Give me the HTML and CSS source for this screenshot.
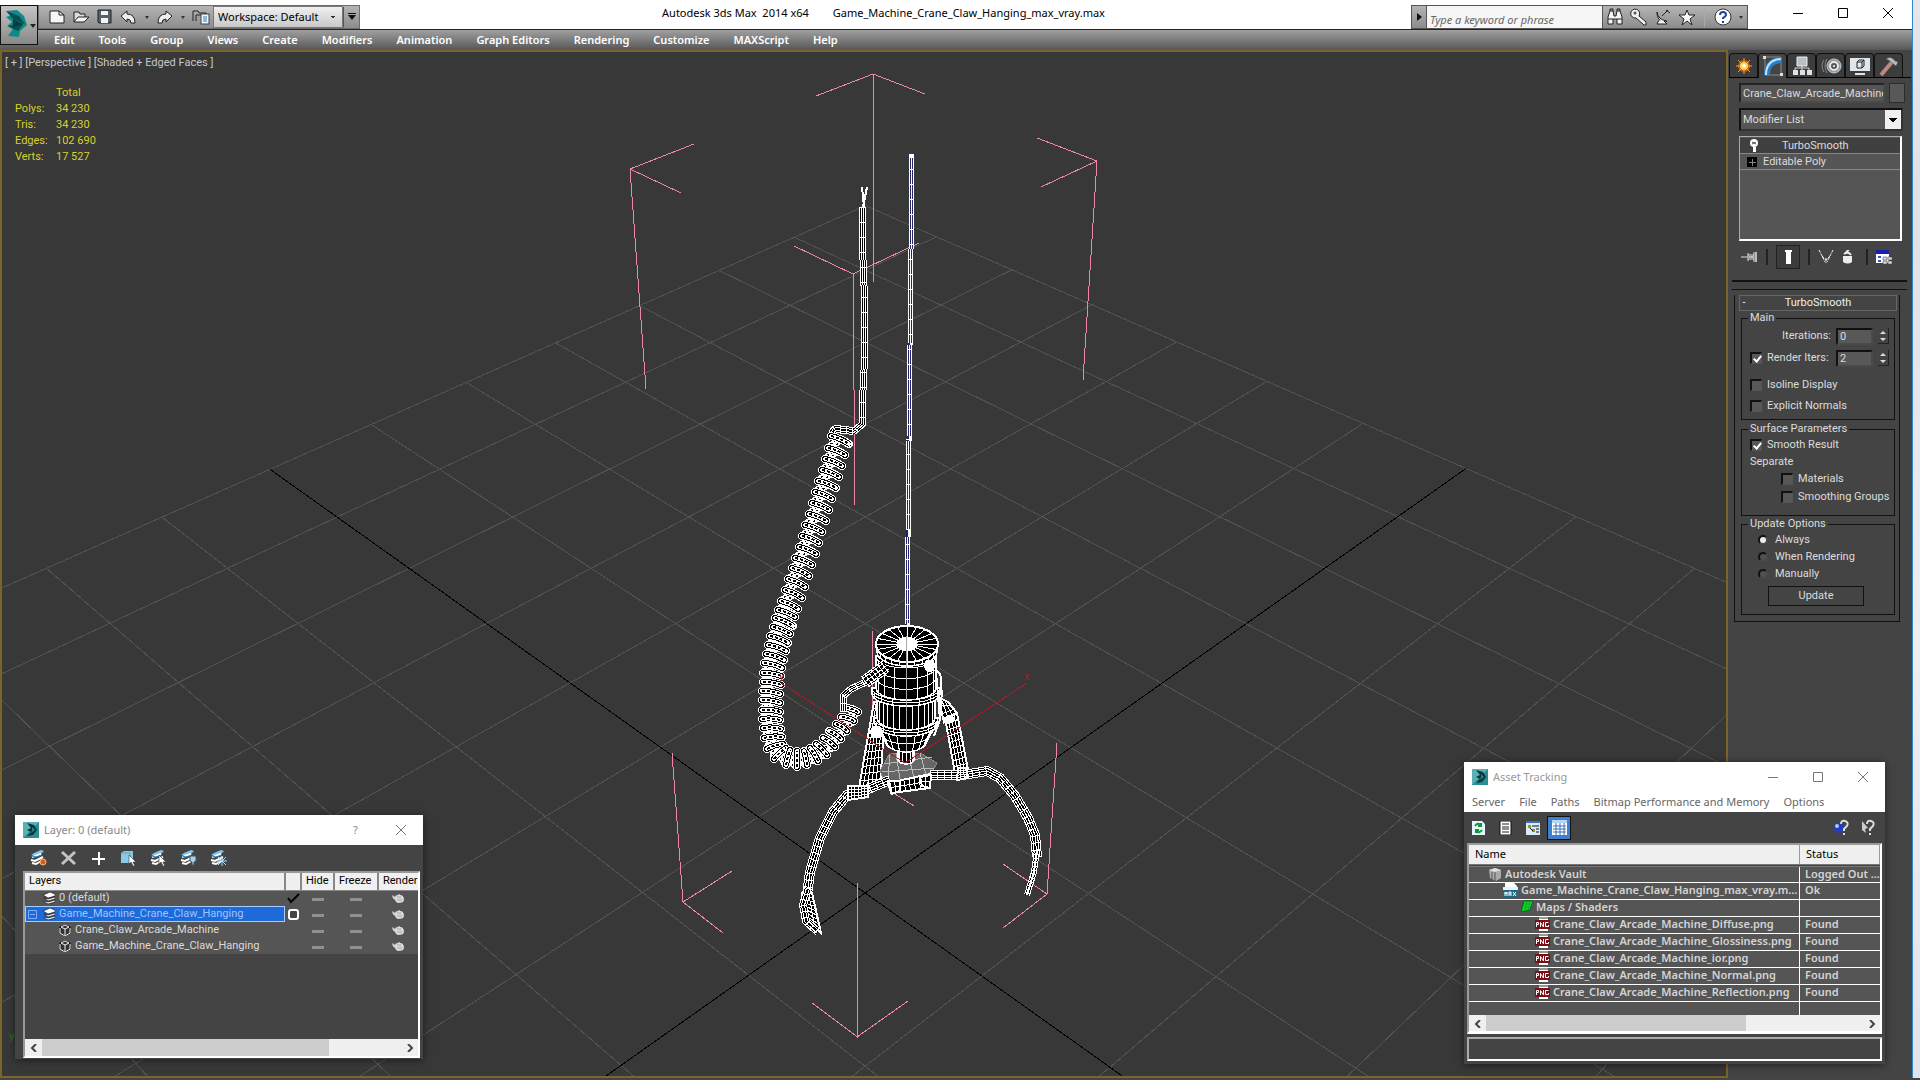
FILE: index.html
```
<!DOCTYPE html>
<html lang="en">
<head>
<meta charset="utf-8">
<title>Autodesk 3ds Max 2014 x64 - Game_Machine_Crane_Claw_Hanging_max_vray.max</title>
<link rel="stylesheet" href="styles.css">
</head>
<body>
<svg class="defs" width="0" height="0" aria-hidden="true">
  <symbol id="logo" viewBox="0 0 16 16">
    <rect width="16" height="16" fill="#2a8f95"/>
    <path d="M0 0h16L0 16z" fill="#7cc6c8" opacity=".6"/>
    <path d="M4 1l7 2 3 5-4 5-6 1 4-4-4-2 4-2z" fill="#07363c"/>
    <path d="M9 5l3 3-4 3 1-3z" fill="#1d8a86"/>
  </symbol>
  <symbol id="teapot" viewBox="0 0 14 11">
    <path d="M1 2l3 2q0-2 3-2 1-2 2 0 4 0 4 5 0 3-6 3-2 0-3-3Q1 5 1 2z" fill="#d8d8d8"/>
    <path d="M6 4h4M6 7h5" stroke="#aaa"/>
  </symbol>
  <symbol id="stack" viewBox="0 0 12 12">
    <path d="M0 3l7-3 5 2v2L5 6zM1 6l4 1 7-2v2L5 9zM1 9l4 1 7-2v2l-7 2-4-2z" fill="#fff" stroke="#000" stroke-width=".6"/>
  </symbol>
  <symbol id="cube" viewBox="0 0 12 12">
    <path d="M1 3l5-2 5 2v6l-5 3-5-3z" fill="#333" stroke="#000"/>
    <path d="M6 5l4-2M6 5L2 3l4-2 4 2M6 5v6M1 4v5l5 3 5-3V4" stroke="#f4f4f4" stroke-width="1" fill="none"/>
  </symbol>
  <symbol id="sheets" viewBox="0 0 17 16">
    <path d="M4 3l7-3 3 1-4 4H1z" fill="#7fc4ee"/>
    <path d="M2 7l9-3M1 10l4 1 8-4M2 13l4 1 7-4" stroke="#fff" stroke-width="2" fill="none"/>
    <path d="M2 6l4 1 6-2" stroke="#2a7bb5" fill="none"/>
  </symbol>
  <symbol id="png" viewBox="0 0 15 14">
    <path d="M4 0h9v14H4z" fill="#fff"/><path d="M4 0h9v2H4z" fill="#999"/>
    <rect y="3" width="15" height="9" fill="#7a0f16"/>
    <path d="M1.500 10V5.500h2v2h-2M5.500 10V5.500L8.500 10V5M13.500 5.500h-3v4h3V8" stroke="#fff" fill="none"/>
  </symbol>
</svg>

<div class="app">
<header class="head">
  <button class="app-button" aria-label="Application menu">
    <svg width="36" height="38" viewBox="0 0 36 38"><path d="M5 5l11-1 7 6 3 9-7 6-1 6-11-1 5-7-6-3 5-4-6-5 6-2z" fill="#0f8a86"/><path d="M5 5l13 5 6 8-12-5zM7 20l16-3-6 8-5-2z" fill="#075052"/><path d="M12 13l10 5-10 3z" fill="#0a3c40"/><path d="M29 18h6l-3 4z" fill="#222"/></svg>
  </button>
  <div class="titlebar">
    <div class="quick">
      <button aria-label="New"><svg width="18" height="16" viewBox="0 0 18 16"><path d="M2 2h9l5 4v8H2z" fill="#f6f6f6" stroke="#222"/><path d="M11 2v4h5" fill="none" stroke="#222"/></svg></button>
      <button aria-label="Open"><svg width="18" height="16" viewBox="0 0 18 16"><path d="M2 13V3h5l1 2h5v3" fill="#ddd" stroke="#222"/><path d="M2 13l4-5h11l-5 5z" fill="#f4f4f4" stroke="#222"/></svg></button>
      <button aria-label="Save"><svg width="18" height="16" viewBox="0 0 18 16"><path d="M2 1h13v13H3l-1-1z" fill="#56616b" stroke="#222"/><path d="M5 2h7v4H5zM5 9h7v5H5z" fill="#f4f4f4"/></svg></button>
      <button aria-label="Undo"><svg width="18" height="16" viewBox="0 0 18 16"><path d="M1 7l6-5v3q8 0 8 9h-4q0-4-4-4v3z" fill="#eee" stroke="#222"/></svg></button>
      <i class="tiny"></i>
      <button aria-label="Redo"><svg width="18" height="16" viewBox="0 0 18 16"><path d="M16 7l-6-5v3q-8 0-8 9h4q0-4 4-4v3z" fill="#eee" stroke="#222"/></svg></button>
      <i class="tiny"></i>
      <button aria-label="Project folder"><svg width="18" height="16" viewBox="0 0 18 16"><path d="M1 12V2h5l1 2h7v3M4 12V6h8" fill="none" stroke="#222"/><rect x="9" y="5" width="8" height="10" fill="#f4f4f4" stroke="#345"/><path d="M11 8h4M11 10h4M11 12h4" stroke="#357ab8"/></svg></button>
      <select class="workspace" aria-label="Workspace"><option>Workspace: Default</option></select>
      <button class="more" aria-label="Customize toolbar"><svg width="10" height="8" viewBox="0 0 10 8"><path d="M1 0h8v1H1zM1 2h8L5 7z" fill="#111"/></svg></button>
    </div>
    <div class="caption"><span>Autodesk 3ds Max&nbsp; 2014 x64</span><span>Game_Machine_Crane_Claw_Hanging_max_vray.max</span></div>
    <div class="search">
      <button aria-label="Collapse search"><svg width="8" height="10" viewBox="0 0 8 10"><path d="M2 1l5 4-5 4z" fill="#111"/></svg></button>
      <input type="text" aria-label="Search" placeholder="Type a keyword or phrase">
      <button aria-label="Search"><svg width="18" height="18" viewBox="0 0 18 18"><path d="M2 16V9l2-6h3l1 5h2l1-5h3l2 6v7h-5v-5H7v5z" fill="#f4f4f4" stroke="#222"/><path d="M2 11h5M11 11h5M4 3V1h3v2M11 3V1h3v2" stroke="#222" fill="none"/></svg></button>
      <button aria-label="Subscription"><svg width="18" height="18" viewBox="0 0 18 18"><path d="M9 8a4.500 4.500 0 1 0-3 2l8 7h2v-3z" fill="#eee" stroke="#222"/><circle cx="5" cy="5" r="1.500" fill="#555"/></svg></button>
      <button aria-label="Communication Center"><svg width="18" height="18" viewBox="0 0 18 18"><path d="M3 4q1 8 10 9-2 2-5 1Q3 11 3 4z" fill="#eee" stroke="#222"/><path d="M8 8l6-6M12 2l4 3M5 12l-2 4h10l-3-3" stroke="#222" fill="#eee"/></svg></button>
      <button aria-label="Favorites"><svg width="18" height="18" viewBox="0 0 18 18"><path d="M9 2l2 5h6l-5 4 2 6-5-4-5 4 2-6-5-4h6z" fill="#f8f8f8" stroke="#222"/></svg></button>
      <i class="rule"></i>
      <button class="ask" aria-label="Help"><svg width="18" height="18" viewBox="0 0 18 18"><circle cx="9" cy="9" r="8" fill="#fff" stroke="#333"/><path d="M6 7q0-3 3-3t3 3q0 1-3 3v1M9 13v2" fill="none" stroke="#2340a0" stroke-width="2"/></svg></button>
      <i class="tiny"></i>
    </div>
    <div class="sys">
      <button aria-label="Minimize"><svg width="12" height="12" viewBox="0 0 12 12"><path d="M1 6.500h10" stroke="#000"/></svg></button>
      <button aria-label="Maximize"><svg width="12" height="12" viewBox="0 0 12 12"><path d="M1.500 1.500h9v9h-9z" fill="none" stroke="#000"/></svg></button>
      <button aria-label="Close"><svg width="12" height="12" viewBox="0 0 12 12"><path d="M1 1l10 10M11 1L1 11" stroke="#000"/></svg></button>
    </div>
  </div>
  <nav class="menubar">
    <a href="#">Edit</a><a href="#">Tools</a><a href="#">Group</a><a href="#">Views</a><a href="#">Create</a><a href="#">Modifiers</a><a href="#">Animation</a><a href="#">Graph Editors</a><a href="#">Rendering</a><a href="#">Customize</a><a href="#">MAXScript</a><a href="#">Help</a>
  </nav>
</header>

<main class="work">
  <section class="viewport">
    <svg class="scene" id="scene" viewBox="0 50 1728 1028" preserveAspectRatio="xMidYMid slice" shape-rendering="crispEdges" role="img" aria-label="Crane claw wireframe"></svg>
    <div class="overlay">
      <p class="view-label">[ + ] [Perspective ] [Shaded + Edged Faces ]</p>
      <table class="stats">
        <tr><td></td><td>Total</td></tr>
        <tr><td>Polys:</td><td>34 230</td></tr>
        <tr><td>Tris:</td><td>34 230</td></tr>
        <tr><td>Edges:</td><td>102 690</td></tr>
        <tr><td>Verts:</td><td>17 527</td></tr>
      </table>
    </div>
  </section>

  <aside class="panel">
    <div class="tabs">
      <button aria-label="Create"><svg width="22" height="20" viewBox="0 0 22 20"><circle cx="11" cy="10" r="6" fill="#c65a14"/><path d="M11 2v16M3 10h16M5 4l12 12M17 4L5 16" stroke="#f0a030"/><circle cx="11" cy="10" r="4" fill="#ffd45a"/><circle cx="11" cy="10" r="2" fill="#fffbe0"/></svg></button>
      <button class="on" aria-label="Modify"><svg width="22" height="20" viewBox="0 0 22 20"><path d="M3 19V1h16v18z" fill="none" stroke="#888"/><path d="M5 19Q5 5 19 4" fill="none" stroke="#2a7fc4" stroke-width="6"/><path d="M4 19Q4 4 19 3" fill="none" stroke="#bfe4fb" stroke-width="2"/><path d="M1 0h3v3H1zM18 17h3v3h-3z" fill="#ddd"/></svg></button>
      <button aria-label="Hierarchy"><svg width="22" height="20" viewBox="0 0 22 20"><path d="M11 9v6M4 15v-3h14v3" stroke="#ddd" fill="none"/><path d="M6 1h10v9H6z" fill="#b8c0c6" stroke="#eee"/><path d="M2 14h5v5H2zM9 14h5v5H9zM16 14h5v5h-5z" fill="#dde2e6"/></svg></button>
      <button aria-label="Motion"><svg width="22" height="20" viewBox="0 0 22 20"><path d="M4 4q-4 6 0 12M7 3q-4 7 0 14" stroke="#888" fill="none"/><circle cx="14" cy="10" r="7" fill="#8e989e" stroke="#c4ccd0"/><circle cx="14" cy="10" r="4" fill="#555" stroke="#e8e8e8" stroke-width="2"/><circle cx="14" cy="10" r="1" fill="#fff"/></svg></button>
      <button aria-label="Display"><svg width="22" height="20" viewBox="0 0 22 20"><path d="M1 2h20v13H1zM6 17h10v2H6z" fill="#dfe6ec"/><path d="M8 6l2-2h5v6l-2 2H8zM8 6h5v6M13 6l2-2" fill="none" stroke="#222"/></svg></button>
      <button aria-label="Utilities"><svg width="22" height="20" viewBox="0 0 22 20"><path d="M3 19L14 6" stroke="#b98b80" stroke-width="4"/><path d="M8 3q5-4 9 2l3 1-2 4-5-4q-2-2-5-3z" fill="#b4bcc2" stroke="#555" stroke-width=".5"/></svg></button>
    </div>
    <div class="object-row">
      <input type="text" aria-label="Object name" value="Crane_Claw_Arcade_Machine">
      <button aria-label="Object color"></button>
    </div>
    <select class="modlist" aria-label="Modifier List"><option>Modifier List</option></select>
    <ul class="stacklist">
      <li class="sel"><svg width="10" height="13" viewBox="0 0 10 13"><circle cx="5" cy="4" r="4" fill="#fff"/><path d="M4 8h3v5H4z" fill="#fff"/><path d="M3 3l4 2M7 3L3 5" stroke="#555"/></svg><span>TurboSmooth</span></li>
      <li><svg width="10" height="10" viewBox="0 0 10 10"><path d="M0 0h10v10H0z" fill="#000"/><path d="M2 5.500h7M5.500 2v7" stroke="#888"/></svg><span>Editable Poly</span></li>
    </ul>
    <div class="stacktools">
      <button aria-label="Pin Stack"><svg width="17" height="12" viewBox="0 0 17 12"><path d="M0 6h7M7 2v8M7 4h6M7 8h6M13 1v10" stroke="#ddd" fill="none"/><path d="M8 5h5v2H8zM14 1h2v10h-2z" fill="#bbb"/></svg></button>
      <i></i>
      <button class="pressed" aria-label="Show end result"><svg width="9" height="14" viewBox="0 0 9 14"><path d="M1 0h7v2H7v12H2V2H1z" fill="#fff"/></svg></button>
      <i></i>
      <button aria-label="Make unique"><svg width="16" height="14" viewBox="0 0 16 14"><path d="M1 0l6 12M15 0L9 12M4 6l4 4 4-4M8 8v5" stroke="#eee" stroke-dasharray="3 1" fill="none"/></svg></button>
      <button class="trash" aria-label="Remove modifier"><svg width="11" height="14" viewBox="0 0 11 14"><path d="M1 6h9v6q-4 3-9 0z" fill="#eee"/><path d="M2 4q4-3 7 1M4 2l3-2" stroke="#eee" stroke-width="2" fill="none"/></svg></button>
      <i></i>
      <button aria-label="Configure sets"><svg width="16" height="15" viewBox="0 0 16 15"><path d="M0 0h13v13H0z" fill="#fff"/><path d="M0 0h13v4H0z" fill="#1820b0"/><path d="M2 6h3v2H2zM2 10h3v2H2z" fill="#4050c0"/><path d="M7 7h4v3H7zM12 7h4v3h-4zM7 11h4v3H7zM12 11h4v3h-4z" fill="#ddd" stroke="#333" stroke-width=".5"/></svg></button>
    </div>
    <div class="rollouts">
      <div class="rollout">
        <button class="rollhead"><span>-</span><b>TurboSmooth</b></button>
        <fieldset class="group main">
          <legend>Main</legend>
          <div class="spin"><label for="it">Iterations:</label><input id="it" type="text" value="0"><button aria-label="Step iterations"></button></div>
          <div class="spin"><label class="tick"><input type="checkbox" checked>Render Iters:</label><input type="text" aria-label="Render iterations" value="2"><button aria-label="Step render iterations"></button></div>
          <label class="tick gap"><input type="checkbox">Isoline Display</label>
          <label class="tick"><input type="checkbox">Explicit Normals</label>
        </fieldset>
        <fieldset class="group surface">
          <legend>Surface Parameters</legend>
          <label class="tick"><input type="checkbox" checked>Smooth Result</label>
          <p>Separate</p>
          <label class="tick deep"><input type="checkbox">Materials</label>
          <label class="tick deep"><input type="checkbox">Smoothing Groups</label>
        </fieldset>
        <fieldset class="group update">
          <legend>Update Options</legend>
          <label class="dot"><input type="radio" name="upd" checked>Always</label>
          <label class="dot"><input type="radio" name="upd">When Rendering</label>
          <label class="dot"><input type="radio" name="upd">Manually</label>
          <button class="push">Update</button>
        </fieldset>
      </div>
    </div>
  </aside>
  <div class="desktop"></div>
</main>
</div>

<section class="win layers" aria-label="Layer manager">
  <header class="wintitle">
    <svg width="16" height="16"><use href="#logo"/></svg><h2>Layer: 0 (default)</h2>
    <button aria-label="Help">?</button>
    <button aria-label="Close"><svg width="12" height="12" viewBox="0 0 12 12"><path d="M1 1l10 10M11 1L1 11" stroke="#777"/></svg></button>
  </header>
  <div class="wintools">
    <button aria-label="New layer"><svg width="17" height="16" viewBox="0 0 17 16"><use href="#sheets"/><circle cx="13" cy="12" r="3" fill="#e2581a" stroke="#ffb080"/></svg></button>
    <button aria-label="Delete"><svg width="17" height="16" viewBox="0 0 17 16"><path d="M2 2l13 12M15 2L2 14" stroke="#c4c4c4" stroke-width="3"/></svg></button>
    <button aria-label="Add"><svg width="17" height="16" viewBox="0 0 17 16"><path d="M9 2v13M2 9h13" stroke="#fff" stroke-width="2"/></svg></button>
    <button aria-label="Select objects"><svg width="17" height="16" viewBox="0 0 17 16"><path d="M1 3l3-2h9v10l-3 2H1z" fill="#8cc8e6"/><path d="M1 3h9v10" fill="none" stroke="#5aa0c8"/><path d="M9 5l7 7h-3l2 4-2 0-2-4-2 2z" fill="#fff" stroke="#333" stroke-width=".6"/></svg></button>
    <button aria-label="Select layers"><svg width="17" height="16" viewBox="0 0 17 16"><use href="#sheets"/><path d="M9 5l7 7h-3l2 4-2 0-2-4-2 2z" fill="#fff" stroke="#333" stroke-width=".6"/></svg></button>
    <button aria-label="Hide layers"><svg width="17" height="16" viewBox="0 0 17 16"><use href="#sheets"/><path d="M10 6h6v5l-2 1v3h-2v-3l-2-1z" fill="#a8d0ea" stroke="#456"/></svg></button>
    <button aria-label="Freeze layers"><svg width="17" height="16" viewBox="0 0 17 16"><use href="#sheets"/><path d="M12 6v10M7 11h10M8 7l8 8M16 7l-8 8" stroke="#a8dcff"/></svg></button>
  </div>
  <div class="sunken">
    <table class="layer-table">
      <colgroup><col><col class="c-mark"><col class="c-hide"><col class="c-freeze"><col class="c-render"></colgroup>
      <thead><tr><th>Layers</th><th></th><th>Hide</th><th>Freeze</th><th>Render</th></tr></thead>
      <tbody>
        <tr><td class="lv1"><svg width="12" height="12"><use href="#stack"/></svg>0 (default)</td><td><svg width="13" height="11" viewBox="0 0 13 11"><path d="M1 5l3 4 8-8" stroke="#000" stroke-width="2" fill="none"/></svg></td><td><i></i></td><td><i></i></td><td><svg width="14" height="11"><use href="#teapot"/></svg></td></tr>
        <tr><td class="lv1 picked"><svg class="fold" width="9" height="9" viewBox="0 0 9 9"><path d="M.5.500h8v8h-8zM2 4.500h5" fill="none" stroke="#7fb0ff"/></svg><svg width="12" height="12"><use href="#stack"/></svg>Game_Machine_Crane_Claw_Hanging</td><td><input type="checkbox" aria-label="Make current"></td><td><i></i></td><td><i></i></td><td><svg width="14" height="11"><use href="#teapot"/></svg></td></tr>
        <tr><td class="lv2"><svg width="12" height="12"><use href="#cube"/></svg>Crane_Claw_Arcade_Machine</td><td></td><td><i></i></td><td><i></i></td><td><svg width="14" height="11"><use href="#teapot"/></svg></td></tr>
        <tr><td class="lv2"><svg width="12" height="12"><use href="#cube"/></svg>Game_Machine_Crane_Claw_Hanging</td><td></td><td><i></i></td><td><i></i></td><td><svg width="14" height="11"><use href="#teapot"/></svg></td></tr>
      </tbody>
    </table>
    <div class="hscroll"><button aria-label="Scroll left"><svg width="8" height="8" viewBox="0 0 8 8"><path d="M6 0L2 4l4 4" fill="none" stroke="#444" stroke-width="2"/></svg></button><div class="track"><div class="thumb wide"></div></div><button aria-label="Scroll right"><svg width="8" height="8" viewBox="0 0 8 8"><path d="M2 0l4 4-4 4" fill="none" stroke="#444" stroke-width="2"/></svg></button></div>
  </div>
</section>

<section class="win assets" aria-label="Asset Tracking">
  <header class="wintitle">
    <svg width="16" height="16"><use href="#logo"/></svg><h2>Asset Tracking</h2>
    <button aria-label="Minimize"><svg width="12" height="12" viewBox="0 0 12 12"><path d="M1 6.500h10" stroke="#777"/></svg></button>
    <button aria-label="Maximize"><svg width="12" height="12" viewBox="0 0 12 12"><path d="M1.500 1.500h9v9h-9z" fill="none" stroke="#777"/></svg></button>
    <button aria-label="Close"><svg width="12" height="12" viewBox="0 0 12 12"><path d="M1 1l10 10M11 1L1 11" stroke="#777"/></svg></button>
  </header>
  <nav class="winmenu"><a href="#">Server</a><a href="#">File</a><a href="#">Paths</a><a href="#">Bitmap Performance and Memory</a><a href="#">Options</a></nav>
  <div class="wintools">
    <button aria-label="Refresh"><svg width="13" height="14" viewBox="0 0 13 14"><path d="M0 0h10l3 3v11H0z" fill="#e8f4ff"/><path d="M3 5q3-4 6-1M9 2v3H6M10 9q-3 4-6 1M4 12V9h3" stroke="#0a9a30" stroke-width="2" fill="none"/></svg></button>
    <button aria-label="Status log"><svg width="13" height="14" viewBox="0 0 13 14"><path d="M1 0h11v14H1z" fill="#fff" stroke="#111"/><path d="M3 3h7M3 6h7M3 8h7M3 11h7" stroke="#222"/></svg></button>
    <button aria-label="Tree view"><svg width="14" height="14" viewBox="0 0 14 14"><path d="M0 0h14v14H0z" fill="#d8ecf8"/><path d="M0 0h14v2H0z" fill="#3a70c0"/><path d="M2 4h3v3H2zM6 8h3v3H6z" fill="#a09020"/><path d="M6 5h7M4 7l3 3M10 8h3M10 11h3" stroke="#111"/></svg></button>
    <button class="pressed" aria-label="Table view"><svg width="15" height="15" viewBox="0 0 15 15"><path d="M0 0h15v15H0z" fill="#fff"/><path d="M0 0h15v3H0z" fill="#b8d4f4"/><path d="M1 6h13M1 9h13M1 12h13M4 3v12M8 3v12M12 3v12" stroke="#3a70c0"/></svg></button>
    <span class="fill"></span>
    <button aria-label="Help"><svg width="17" height="17" viewBox="0 0 17 17"><circle cx="6" cy="9" r="5" fill="#2040c0"/><circle cx="4" cy="7" r="2" fill="#b0c4ff"/><path d="M8 5q0-4 4-3t2 5l-3 3v2M11 14v2" stroke="#ddd" stroke-width="2" fill="none"/></svg></button>
    <button aria-label="What's this"><svg width="17" height="17" viewBox="0 0 17 17"><path d="M2 2l6 7-3 1 1 4-4-3z" fill="#ccc"/><path d="M7 5q0-4 4-3t2 5l-3 3v2M10 14v2" stroke="#ddd" stroke-width="2" fill="none"/></svg></button>
  </div>
  <div class="sunken">
    <table class="asset-table">
      <colgroup><col><col class="c-status"></colgroup>
      <thead><tr><th>Name</th><th>Status</th></tr></thead>
      <tbody>
        <tr><td class="a1"><svg width="14" height="14" viewBox="0 0 14 14"><path d="M1 3l6-2 6 2v8l-5 3-6-3z" fill="#aaa"/><path d="M1 3l6 2 6-2-6-2z" fill="#ddd"/><path d="M7 5v9M4 5v7" stroke="#555"/></svg>Autodesk Vault</td><td>Logged Out ...</td></tr>
        <tr><td class="a2"><svg width="15" height="14" viewBox="0 0 15 14"><path d="M2 0h9l3 3v4H2z" fill="#fff"/><path d="M0 5h15v9H0z" fill="#1a6a8a"/><path d="M0 4h15v3H0z" fill="#e8f6fc"/><path d="M2 13V9l1 2 1-2v4M6 13V9h2v4M6 11h2M10 9l3 4M13 9l-3 4" stroke="#fff" fill="none"/></svg>Game_Machine_Crane_Claw_Hanging_max_vray.m...</td><td>Ok</td></tr>
        <tr><td class="a3"><svg width="12" height="12" viewBox="0 0 12 12"><path d="M3 1h9l-3 9-9 2z" fill="#10d820" stroke="#062" /><path d="M4 4h6M3 7h6M6 1L4 10M9 1L7 10" stroke="#083" stroke-width=".5"/></svg>Maps / Shaders</td><td></td></tr>
        <tr><td class="a4"><svg width="15" height="14"><use href="#png"/></svg>Crane_Claw_Arcade_Machine_Diffuse.png</td><td>Found</td></tr>
        <tr><td class="a4"><svg width="15" height="14"><use href="#png"/></svg>Crane_Claw_Arcade_Machine_Glossiness.png</td><td>Found</td></tr>
        <tr><td class="a4"><svg width="15" height="14"><use href="#png"/></svg>Crane_Claw_Arcade_Machine_ior.png</td><td>Found</td></tr>
        <tr><td class="a4"><svg width="15" height="14"><use href="#png"/></svg>Crane_Claw_Arcade_Machine_Normal.png</td><td>Found</td></tr>
        <tr><td class="a4"><svg width="15" height="14"><use href="#png"/></svg>Crane_Claw_Arcade_Machine_Reflection.png</td><td>Found</td></tr>
        <tr class="last"><td></td><td></td></tr>
      </tbody>
    </table>
    <div class="hscroll"><button aria-label="Scroll left"><svg width="8" height="8" viewBox="0 0 8 8"><path d="M6 0L2 4l4 4" fill="none" stroke="#444" stroke-width="2"/></svg></button><div class="track"><div class="thumb"></div></div><button aria-label="Scroll right"><svg width="8" height="8" viewBox="0 0 8 8"><path d="M2 0l4 4-4 4" fill="none" stroke="#444" stroke-width="2"/></svg></button></div>
  </div>
  <div class="statusbox"></div>
</section>
<script src="scene.js"></script>
</body>
</html>
```
FILE: styles.css
```
* { box-sizing: border-box; margin: 0; padding: 0; }
body { font-family: Roboto, "Liberation Sans", sans-serif; font-size: 11px; line-height: 16px; color: #dcdcdc; background: #444; height: 100vh; overflow: hidden; }
button { border: 0; background: none; font: inherit; color: inherit; display: flex; align-items: center; justify-content: center; }
input, select { font: inherit; color: inherit; }
a { color: inherit; text-decoration: none; }
table { border-collapse: collapse; }
th { font-weight: normal; text-align: left; }
svg { flex: none; }
.defs { position: absolute; }

.app { display: flex; flex-direction: column; height: 100vh; }
.head { display: grid; grid-template: 29px 21px / 38px 1fr; font-family: "Noto Sans", sans-serif; flex: none; background: #fff; color: #000; }
.app-button { grid-area: 1 / 1 / 3 / 2; z-index: 1; height: 40px; align-self: center; border: 1px solid #111; background: linear-gradient(#c4c4c4, #888); }
.titlebar { grid-area: 1 / 2; display: flex; align-items: flex-end; }
.quick { display: flex; align-items: center; height: 24px; width: 322px; background: linear-gradient(#b4b4b4, #8c8c8c); border: 1px solid #6c6c6c; padding-left: 6px; }
.quick button { width: 24px; height: 20px; }
.tiny { width: 12px; display: flex; justify-content: center; }
.tiny::before { content: ""; border: 2px solid transparent; border-top: 3px solid #333; border-bottom: 0; }
.workspace { appearance: none; width: 130px; height: 22px; border: 1px solid #777; border-radius: 0; padding-left: 4px; color: #000;
  background: linear-gradient(45deg, transparent 50%, #333 50%) 117px 9px / 2px 3px no-repeat, linear-gradient(-45deg, transparent 50%, #333 50%) 119px 9px / 2px 3px no-repeat, linear-gradient(#f0f0f0, #c8c8c8); }
.quick .more { width: 16px; border-left: 1px solid #555; }
.caption { flex: 1; display: flex; justify-content: center; gap: 24px; height: 24px; line-height: 16px; white-space: nowrap; padding-right: 4px; }
.search { display: flex; align-items: center; height: 24px; width: 337px; background: linear-gradient(#b4b4b4, #8c8c8c); border: 1px solid #555; }
.search button { width: 24px; }
.search button:first-child { width: 14px; }
.search input { width: 179px; height: 22px; border: 0; border-left: 1px solid #555; border-right: 1px solid #555; background: #f6f6f6; color: #000; padding: 4px 3px 0; }
.search input::placeholder { font-style: italic; color: #666; }
.rule { width: 1px; height: 20px; background: #a8a8a8; margin: 0 6px; }
.sys { width: 172px; height: 24px; display: flex; padding: 0 9px 9px 27px; }
.sys button { flex: 1; height: 15px; }
.menubar { grid-area: 2 / 1 / 3 / 3; display: flex; gap: 24px; align-items: center; padding-left: 54px; margin-right: 7px; background: linear-gradient(#a0a0a0, #565656); border-top: 1px solid #222; color: #fff; font-weight: 600; line-height: 18px; }

.work { flex: 1; min-height: 0; display: flex; padding-bottom: 2px; }
.viewport { flex: 1; min-width: 0; position: relative; background: #383838; border: 2px solid #7a642c; overflow: hidden; }
.scene { position: absolute; inset: -2px; width: calc(100% + 4px); height: calc(100% + 4px); }
.overlay { position: relative; padding: 3px; }
.view-label { font-size: 11px; color: #c8c8c8; }
.stats { margin: 14px 0 0 10px; color: #d8d030; }
.stats td { height: 16px; }
.stats td:first-child { width: 41px; }

.panel { width: 184px; background: #444; }
.tabs { display: flex; margin: 3px 1px 0 1px; padding-right: 8px; border-bottom: 1px solid #000; height: 25px; }
.tabs button { flex: 1; border: 1px solid #111; border-bottom: 0; border-radius: 4px 4px 0 0; background: #3c3c3c; }
.tabs .on { background: #444; margin-bottom: -1px; }
.object-row { display: flex; gap: 4px; margin: 5px 7px 0 11px; }
.object-row input { width: 146px; height: 20px; background: #555; border: 2px solid #222; border-right-color: #4a4a4a; border-bottom-color: #4a4a4a; padding-left: 2px; }
.object-row button { width: 17px; height: 20px; background: #585858; border: 1px solid #2c2c2c; }
.modlist { display: block; appearance: none; width: 164px; height: 23px; margin: 5px 0 0 11px; border: 2px solid #111; border-right-color: #333; border-bottom-color: #333; border-radius: 0; padding-left: 2px;
  background: linear-gradient(45deg, transparent 50%, #000 50%) 148px 8px / 4px 4px no-repeat, linear-gradient(-45deg, transparent 50%, #000 50%) 152px 8px / 4px 4px no-repeat, linear-gradient(#f0f0f0, #f0f0f0) right / 16px 19px no-repeat, #555; }
.stacklist { list-style: none; width: 163px; height: 105px; margin: 5px 0 0 11px; padding-top: 1px; background: #555; border: 2px solid #fff; border-top: 1px solid #aaa; border-left: 1px solid #aaa; }
.stacklist li { display: flex; align-items: center; height: 16px; padding-left: 7px; gap: 5px; border-bottom: 1px solid #888; }
.stacklist li span { padding-left: 1px; }
.stacklist .sel { background: #404040; padding-left: 9px; }
.stacklist .sel span { padding-left: 18px; }
.stacktools { display: flex; align-items: center; justify-content: space-between; height: 24px; margin: 4px 20px 11px 13px; }
.stacktools i { width: 2px; height: 16px; background: #222; }
.stacktools .pressed { width: 24px; height: 24px; border: 1px solid #222; background: #3c3c3c; }
.stacktools .trash { margin-right: 5px; }
.rollouts { border-top: 2px solid #111; margin: 0 5px 0 4px; padding: 13px 7px 0 2px; position: relative; }
.rollouts::before { content: ""; position: absolute; left: 0; right: 0; top: 7px; border-top: 1px solid #111; }
.rollout { border: 1px solid #111; border-top: 0; padding: 0 4px 6px 6px; }
.rollhead { width: calc(100% + 4px); margin-left: -2px; height: 16px; border: 1px solid #666; color: #eee; }
.rollhead span { width: 8px; }
.rollhead b { flex: 1; font-weight: normal; padding-right: 8px; }
.group { border: 1px solid #111; margin: 0; padding: 0 5px 0 8px; display: flex; flex-direction: column; min-width: 0; }
.group legend { padding: 0 2px; margin-left: -2px; line-height: 14px; }
.main { height: 109px; }
.surface { height: 94px; margin-top: 2px; }
.update { height: 98px; margin-top: 1px; }
.spin { display: flex; align-items: center; justify-content: flex-end; height: 22px; gap: 5px; }
.spin input[type=text] { width: 37px; height: 17px; background: #585858; border: 2px solid #111; border-right-color: #4a4a4a; border-bottom-color: #4a4a4a; padding-left: 2px; }
.spin button { width: 11px; height: 16px; border: 1px solid #222; border-top: 0; border-left: 0; flex-direction: column; gap: 4px; }
.spin button::before { content: ""; border: 3px solid transparent; border-bottom: 3px solid #ddd; border-top: 0; }
.spin button::after { content: ""; border: 3px solid transparent; border-top: 3px solid #ddd; border-bottom: 0; }
.spin .tick { margin-right: auto; }
.tick { display: flex; align-items: center; gap: 5px; height: 21px; white-space: nowrap; }
.tick.gap { margin-top: 5px; }
.surface .tick { height: 18px; }
.surface .deep { margin-left: 31px; }
.tick input { appearance: none; width: 12px; height: 12px; flex: none; background: #585858; border: 2px solid #111; border-right: 1px solid #555; border-bottom: 1px solid #555; position: relative; }
.tick input:checked::after { content: ""; position: absolute; left: 3px; top: 0; width: 3px; height: 6px; border: solid #fff; border-width: 0 2px 2px 0; transform: rotate(40deg); }
.dot { display: flex; align-items: center; gap: 7px; height: 17px; padding-left: 8px; }
.dot input { appearance: none; width: 10px; height: 10px; border-radius: 50%; background: #505050; border: 2px solid #111; border-right-color: #4a4a4a; border-bottom-color: #4a4a4a; }
.dot input:checked { background: #eee; }
.push { width: 96px; height: 20px; margin: 4px 0 0 18px; border: 1px solid #111; }
.desktop { width: 8px; border-left: 1px solid #2f86c8; background: linear-gradient(#e4e6ea, #dfe1e5 20%, #eceef0 60%, #e2e4e8); margin-top: -50px; z-index: 2; }

.win { position: absolute; background: #444; box-shadow: 0 1px 8px rgba(0, 0, 0, .5); display: flex; flex-direction: column; }
.layers { left: 15px; bottom: 21px; width: 408px; height: 244px; padding: 0 3px 1px 8px; }
.assets { right: 35px; bottom: 16px; width: 421px; height: 302px; padding: 0 3px 3px; }
.wintitle { display: flex; align-items: center; height: 30px; background: #fff; color: #999; font-family: "Noto Sans", sans-serif; }
.wintitle h2 { flex: 1; font-size: 11px; font-weight: normal; padding-left: 5px; }
.wintitle button { width: 45px; }
.layers .wintitle { margin: 0 -3px 0 -8px; padding-left: 8px; color: #888; }
.assets .wintitle { margin: 0 -3px; padding-left: 8px; }
.winmenu { display: flex; gap: 14px; height: 20px; line-height: 20px; margin: 0 -3px; padding-left: 8px; background: #fff; color: #666; font-family: "Noto Sans", sans-serif; }
.wintools { display: flex; align-items: center; height: 26px; }
.wintools button { width: 30px; }
.assets .wintools { height: 31px; margin-left: -2px; }
.assets .wintools button { width: 27px; height: 24px; }
.assets .wintools .pressed { width: 24px; background: #3f7fd0; border: 1px solid #111; margin-left: 1px; }
.fill { flex: 1; }
.sunken { flex: 1; display: flex; flex-direction: column; border: 2px solid #fff; border-top-color: #999; border-left-color: #999; min-height: 0; overflow: hidden; }
.layer-table { table-layout: fixed; width: 100%; margin-bottom: auto; }
.c-mark { width: 16px; } .c-hide { width: 33px; } .c-freeze { width: 44px; } .c-render { width: 40px; }
.layer-table th { height: 17px; background: #f0f0f0; color: #000; padding-left: 4px; border-right: 2px solid #888; border-bottom: 1px solid #888; white-space: nowrap; }
.layer-table th:last-child { border-right: 0; }
.layer-table td { height: 16px; background: #555; line-height: 14px; white-space: nowrap; text-align: center; }
.layer-table td svg { vertical-align: middle; }
.layer-table td:first-child { text-align: left; }
.layer-table td:first-child svg { margin-right: 4px; }
.layer-table .lv1 { padding-left: 18px; }
.layer-table .lv2 { padding-left: 34px; }
.layer-table .picked { background: #1e6ad8; outline: 1px solid #a8ccff; outline-offset: -1px; color: #9cc4ff; padding-left: 3px; }
.layer-table .picked .fold { margin-right: 6px; }
.layer-table td i { display: inline-block; width: 12px; height: 3px; background: #909090; }
.layer-table td input { appearance: none; display: block; margin: 0 auto; width: 11px; height: 11px; border: 2px solid #fff; border-radius: 3px; background: #444; }
.hscroll { display: flex; height: 17px; background: #f0f0f0; flex: none; }
.hscroll button { width: 17px; }
.track { flex: 1; display: flex; }
.thumb { width: 69%; background: #cdcdcd; }
.thumb.wide { width: 80%; }
.assets .sunken { flex: none; height: 191px; border-bottom-width: 3px; }
.asset-table { table-layout: fixed; width: 100%; margin-bottom: auto; font-family: "Noto Sans", sans-serif; }
.c-status { width: 80px; }
.asset-table th { height: 20px; background: #f0f0f0; color: #000; padding-left: 6px; border-bottom: 3px double #777; border-right: 1px solid #999; }
.asset-table td { height: 17px; line-height: 14px; background: #555; font-weight: 600; color: #d4d4d4; white-space: nowrap; overflow: hidden; border-bottom: 1px solid #fff; vertical-align: top; }
.asset-table td svg { vertical-align: top; margin-right: 3px; }
.asset-table td + td { padding-left: 5px; border-left: 1px solid #fff; }
.asset-table .a1 { padding-left: 19px; } .asset-table .a2 { padding-left: 34px; } .asset-table .a3 { padding-left: 52px; } .asset-table .a4 { padding-left: 66px; }
.asset-table .last td { border-bottom: 0; height: 14px; }
.statusbox { margin-top: 3px; height: 24px; border: 2px solid #fff; border-top-color: #aaa; border-left-color: #aaa; }
```
FILE: scene.js
```
const svg = document.getElementById('scene');
const parts = [];
const line = (x1, y1, x2, y2, c, w = 1) =>
  parts.push(`<path d="M${x1} ${y1}L${x2} ${y2}" stroke="${c}" stroke-width="${w}" fill="none"/>`);
const path = (d, stroke, w = 1, fill = 'none', extra = '') =>
  parts.push(`<path d="${d}" stroke="${stroke}" stroke-width="${w}" fill="${fill}" ${extra}/>`);

// Home grid: 14 by 14 cells in perspective, far corner at (0,0)
const proj = (u, v) => {
  const k = 1 - 0.02657 * u - 0.02763 * v;
  return [(865.4 - 92.23 * u + 45.3 * v) / k, (205.7 + 25.19 * u + 24.59 * v) / k];
};
for (let i = 0; i <= 14; i++) {
  if (i === 7) continue;
  line(...proj(i, 0), ...proj(i, 14), '#525252');
  line(...proj(0, i), ...proj(14, i), '#525252');
}
line(...proj(7, 0), ...proj(7, 14), '#000');
line(...proj(0, 7), ...proj(14, 7), '#000');

// Selection brackets at the corners of the bounding box
const pink = '#ee88a4';
path('M816 96L873 74L925 94M873 74V282', pink);
path('M694 144L630 169L681 193M630 169L646 389', pink);
path('M1037 138L1097 161L1041 187M1097 161L1083 380', pink);
path('M794 246L853 274L919 243M853.500 274L854.500 505', pink);
path('M872.500 631V710M895 794L914 806', pink);
path('M1057 743L1047 894L1003 864M1047 894L1003 928', pink);
path('M672 753L683 902L732 871M683 902L723 933', pink);
path('M857.500 883V1037L812 1003M857 1037L908 1001', pink);

// A wireframe tube: outline, dark faces, lengthwise edges and cross rings
const tube = (d, w, ring = 5) => {
  path(d, '#fff', w, 'none', 'stroke-linejoin="round"');
  path(d, '#000', w - 2, 'none', 'stroke-linejoin="round"');
  if (w > 5) { path(d, '#fff', w - 4); path(d, '#000', w - 6); }
  if (w > 8) path(d, '#fff', 1);
  path(d, '#fff', w, 'none', `stroke-dasharray="1 ${ring}"`);
};

// Straight cable and rod
path('M862 187L864 207M867 187L863 207', '#fff', 2);
tube('M862.500 207L863 260L865 310L864 370L862.500 400V424L853 432', 7, 14);
path('M912 154L907 636', '#fff', 5);
path('M912 158L907 625', '#24246c', 3);
path('M912 154L907 636', '#fff', 1);
path('M912 154L907 625', '#fff', 5, 'none', 'stroke-dasharray="1 14"');

// Coiled cable: loops laid across the centre line, each joined to the next behind it
const centre = document.createElementNS('http://www.w3.org/2000/svg', 'path');
centre.setAttribute('d', 'M840 440C827 485 815 525 802 567C790 605 776 640 772 675Q769 725 774 743C778 758 792 761 807 758Q822 752 833 738L846 722L854 704');
const total = centre.getTotalLength();
tube('M853 431L836 429Q831 431 833 440', 8);
const loops = [];
for (let s = 0; s < total; s += s / total < 0.4 ? 11.5 : s / total < 0.85 ? 9 : 10) {
  const p = centre.getPointAtLength(s), q = centre.getPointAtLength(Math.min(s + 1, total));
  const n = Math.hypot(q.x - p.x, q.y - p.y) || 1;
  const dx = (q.y - p.y) / n, dy = -(q.x - p.x) / n;
  const h = 9 - 8 * Math.max(0, s / total - 0.75);
  loops.push([p.x - dx * h, p.y - dy * h - 1, p.x + dx * h, p.y + dy * h + 1].map(v => Math.round(v)));
}
loops.forEach(([x1, y1, x2, y2], i) => {
  const next = loops[i + 1];
  if (next) {
    const mx = (x1 + x2) / 2, my = (y1 + y2) / 2;
    const back = `M${mx} ${my}L${next[0]} ${next[1]}`;
    path(back, '#fff', 8, 'none', 'stroke-linecap="round"');
    path(back, '#111', 5, 'none', 'stroke-dasharray="2 2"');
    path(back, '#fff', 2);
  }
  const d = `M${x1} ${y1}Q${(x1 + x2) / 2} ${(y1 + y2) / 2 - 2} ${x2} ${y2}`;
  path(d, '#fff', 8, 'none', 'stroke-linecap="round"');
  path(d, '#000', 6, 'none', 'stroke-linecap="round" stroke-dasharray="4 1"');
  path(d, '#fff', 4, 'none', 'stroke-linecap="round"');
  path(d, '#000', 2, 'none', 'stroke-dasharray="3 2"');
});
tube('M843 712L843 696L851 689L866 682', 7, 7);

// Struts between motor and claw arms
const mesh = (pts, rows, cols) => {
  // pts: four corners, clockwise from top left
  const mix = (a, b, t) => [a[0] + (b[0] - a[0]) * t, a[1] + (b[1] - a[1]) * t];
  path('M' + pts.map(p => p.join(' ')).join('L') + 'Z', '#fff', 2, '#000');
  for (let i = 1; i < rows; i++) line(...mix(pts[0], pts[3], i / rows), ...mix(pts[1], pts[2], i / rows), '#fff');
  for (let i = 1; i < cols; i++) line(...mix(pts[0], pts[1], i / cols), ...mix(pts[3], pts[2], i / cols), '#fff');
};
mesh([[874, 702], [886, 700], [880, 786], [859, 788]], 12, 5);
mesh([[938, 697], [948, 702], [957, 713], [944, 722]], 3, 3);
mesh([[945, 718], [957, 713], [968, 770], [955, 773]], 9, 4);

// Base plate
path('M880 771L890 753H920L937 763L932 772L910 780H884Z', '#888', 1, '#666');
path('M884 764L932 757M882 772L934 768M896 753L900 779M908 753L914 778M890 753L888 779M920 753L926 775', '#bbb');

// Claw arms
tube('M890 780L863 791L847 795L833 812L820 838L810 872L807 895', 10, 6);
mesh([[802, 893], [812, 893], [821, 933], [803, 920]], 9, 3);
tube('M808 888L803 905L806 921L818 932', 8);
tube('M930 775H963L987 771L1000 778L1015 796L1028 818L1035 835L1037 857', 10, 6);
tube('M1037 850L1034 872L1027 895', 6, 3);
mesh([[888, 783], [930, 774], [930, 788], [891, 793]], 2, 8);
mesh([[889, 781], [900, 781], [900, 791], [892, 794]], 2, 2);
mesh([[920, 777], [931, 775], [930, 788], [922, 786]], 2, 2);
mesh([[958, 768], [966, 768], [968, 778], [957, 780]], 5, 3);
mesh([[848, 786], [868, 786], [868, 797], [848, 800]], 4, 6);

// Motor: stacked barrel sections seen from above
const barrel = (cx, y0, y1, r0, r1, ry, n, rings) => {
  path(`M${cx - r0} ${y0}L${cx - r1} ${y1}A${r1} ${ry} 0 0 0 ${cx + r1} ${y1}L${cx + r0} ${y0}Z`, '#fff', 1.500, '#000');
  for (let i = 1; i < n; i++) {
    const a = Math.PI * i / n, c = Math.cos(a), s = Math.sin(a);
    line(cx + r0 * c, y0 + ry * s, cx + r1 * c, y1 + ry * s, '#fff');
  }
  for (let i = 0; i <= rings; i++) {
    const t = i / rings, r = r0 + (r1 - r0) * t, y = y0 + (y1 - y0) * t;
    path(`M${cx - r} ${y}A${r} ${ry} 0 0 0 ${cx + r} ${y}`, '#fff');
  }
};
barrel(906, 748, 760, 8, 8, 4, 6, 1);
barrel(906, 724, 740, 30, 21, 12, 10, 2);
barrel(906, 718, 724, 32, 31, 12, 8, 2);
barrel(906, 694, 718, 29, 29, 12, 14, 1);
barrel(906, 688, 694, 34, 34, 12, 8, 2);
barrel(906, 656, 688, 30, 30, 12, 8, 3);
barrel(907, 646, 652, 31, 30, 14, 12, 1);
path('M876 644A31 18 0 0 1 938 644A31 18 0 0 1 876 644Z', '#fff', 2, '#000');
for (let i = 0; i < 20; i++) {
  const a = Math.PI * i / 10;
  line(907, 644, 907 + 31 * Math.cos(a), 644 + 18 * Math.sin(a), '#fff');
}
path('M897 644A10 7 0 0 1 917 644A10 7 0 0 1 897 644Z', '#fff', 1, '#fff');
path('M929 660a5 6 0 1 0 1 0ZM876 726a6 6 0 1 0 1 0ZM949 715a4 4 0 1 0 1 0Z', '#fff', 1, '#fff');
path('M935 670Q943 672 941 690M942 690L940 720L934 736M936 672L940 720', '#fff', 2);
tube('M865 682L886 666', 13, 3);
line(907, 636, 906, 752, '#aaa');

// Pivot axes
const red = '#a81c28';
path('M1027 683L905 763L781 683', red);
parts.push(`<text x="1024" y="680" fill="${red}" font-size="11">x</text><text x="779" y="680" fill="${red}" font-size="11">y</text><text x="9" y="1040" fill="#148014" font-size="11">y</text>`);
svg.innerHTML = parts.join('');
```
